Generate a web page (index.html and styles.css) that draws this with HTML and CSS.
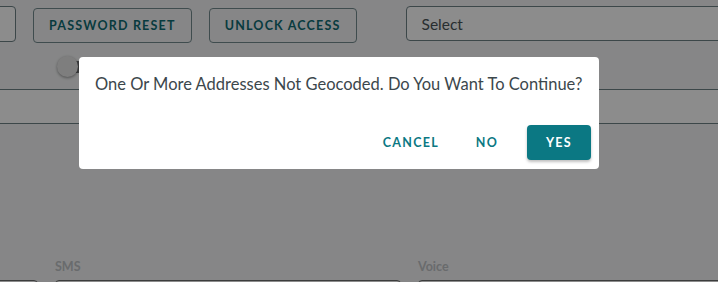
FILE: index.html
```html
<!DOCTYPE html>
<html>
<head>
<meta charset="utf-8">
<link rel="stylesheet" href="styles.css">
</head>
<body>
<div class="page">
  <div class="row-top">
    <div class="input stub"></div>
    <button class="btn-outline">Password Reset</button>
    <button class="btn-outline">Unlock Access</button>
    <div class="spacer"></div>
    <div class="input select">Select</div>
  </div>
  <div class="row-toggle">
    <div class="toggle"><span class="track"></span><span class="knob"></span></div>
  </div>
  <div class="input wide"></div>
  <div class="row-fields">
    <div class="field stub2"><div class="outline"></div></div>
    <div class="field"><label>SMS</label><div class="outline"></div></div>
    <div class="field"><label>Voice</label><div class="outline"></div></div>
  </div>
</div>
<div class="overlay">
  <div class="dialog">
    <p class="message">One Or More Addresses Not Geocoded. Do You Want To Continue?</p>
    <div class="actions">
      <button class="btn-text">Cancel</button>
      <button class="btn-text">No</button>
      <button class="btn-primary">Yes</button>
    </div>
  </div>
</div>
</body>
</html>
```
FILE: styles.css
```css
* { box-sizing: border-box; }
html, body { margin: 0; padding: 0; }
body {
  width: 718px;
  height: 282px;
  overflow: hidden;
  background: #f4f5f6;
  font-family: "Source Sans Pro", Lato, "Liberation Sans", sans-serif;
  position: relative;
}
.page { display: flex; flex-direction: column; height: 282px; overflow: hidden; }
.row-top {
  display: flex;
  align-items: flex-start;
  margin-top: 6px;
  margin-left: -84px;
  gap: 17px;
  flex-shrink: 0;
}
.input {
  height: 36px;
  border: 1px solid #6e8186;
  border-radius: 4px;
  background: #fff;
  flex-shrink: 0;
}
.stub { width: 100px; }
.btn-outline {
  margin-top: 2px;
  height: 35px;
  padding: 0 15px;
  border: 1px solid #738a8f;
  border-radius: 4px;
  background: transparent;
  color: #0f6c73;
  font-family: inherit;
  font-weight: 700;
  font-size: 12.5px;
  letter-spacing: 1.2px;
  text-transform: uppercase;
  flex-shrink: 0;
}
.spacer { width: 15px; flex-shrink: 0; }
.select {
  flex: 1 0 auto;
  margin-right: -20px;
  padding-left: 15px;
  display: flex;
  align-items: center;
  color: #4a5458;
  font-size: 15.5px;
  height: 35px;
}
.row-toggle { height: 46px; padding-left: 57px; padding-top: 13px; flex-shrink: 0; }
.toggle { position: relative; width: 40px; height: 21px; }
.track {
  position: absolute; left: 6px; top: 5px; width: 34px; height: 12px;
  border-radius: 6px; background: #6d6e70;
}
.knob {
  position: absolute; left: 0; top: 0; width: 21px; height: 21px; border-radius: 50%;
  background: #e6e6e6; box-shadow: 0 1px 3px rgba(0,0,0,0.4);
}
.wide {
  height: 35px;
  border-width: 1px 0;
  border-radius: 0;
}
.row-fields {
  display: flex;
  gap: 17px;
  margin-top: 135px;
  margin-left: -62px;
  flex-shrink: 0;
}
.field { display: flex; flex-direction: column; width: 346px; flex-shrink: 0; }
.field.stub2 { width: 100px; padding-top: 21px; }
.field label {
  color: #c0c3c6;
  font-size: 12.5px;
  font-weight: 700;
  height: 21px;
  padding-top: 0;
}
.outline {
  height: 36px;
  border: 1px solid #6e6f70;
  border-radius: 4px;
  background: #fff;
}
.overlay {
  position: absolute;
  inset: 0;
  background: rgba(0, 0, 0, 0.45);
  display: flex;
  align-items: flex-start;
  padding: 57px 0 0 79px;
}
.dialog {
  width: 520px;
  background: #fff;
  border-radius: 4px;
  display: flex;
  flex-direction: column;
}
.message {
  margin: 0;
  padding: 14px 16px 0;
  font-size: 16.5px;
  line-height: 26px;
  color: #3c474c;
  white-space: nowrap;
}
.actions {
  display: flex;
  justify-content: flex-end;
  gap: 8px;
  padding: 28px 8px 9px;
}
.btn-text, .btn-primary {
  height: 35px;
  min-width: 64px;
  padding: 0 8px;
  border: none;
  border-radius: 4px;
  background: transparent;
  color: #0b7883;
  font-family: inherit;
  font-weight: 700;
  font-size: 12.5px;
  letter-spacing: 1.3px;
  text-transform: uppercase;
}
.btn-primary {
  background: #0b7883;
  color: #fff;
  box-shadow: 0 2px 3px rgba(0,0,0,0.25);
}
```
